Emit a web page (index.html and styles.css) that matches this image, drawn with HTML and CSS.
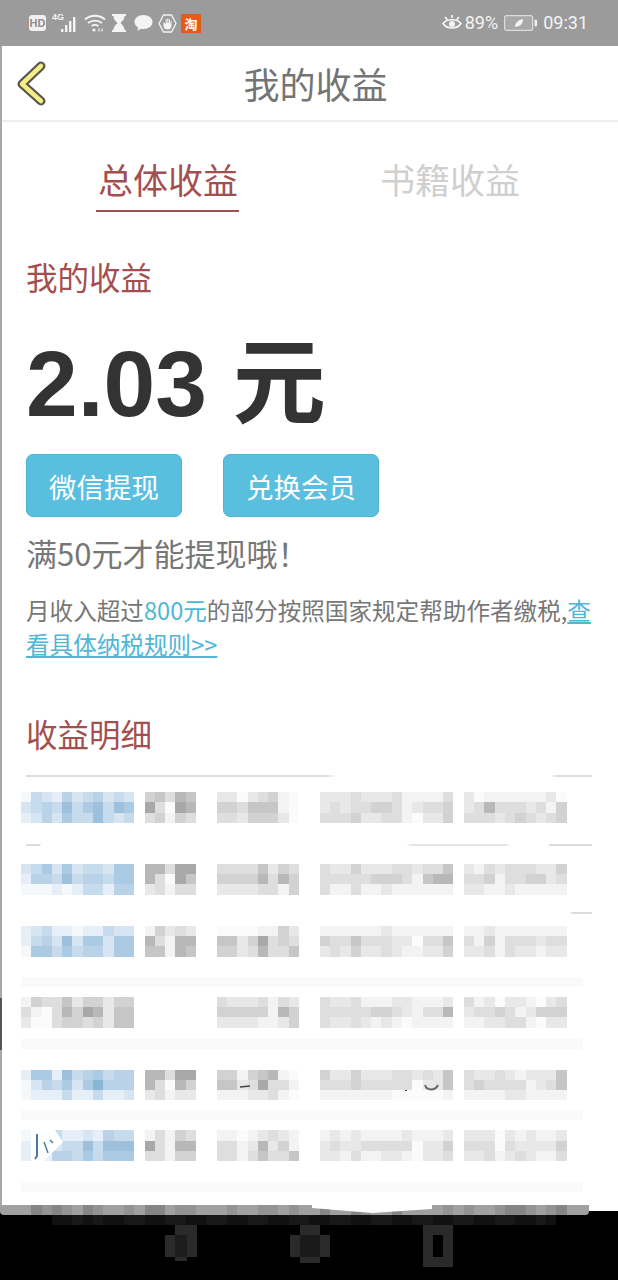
FILE: index.html
```html
<!DOCTYPE html>
<html lang="zh-CN">
<head>
  <meta charset="UTF-8">
  <meta name="viewport" content="width=device-width, initial-scale=1.0">
  <title>我的收益</title>
  <link rel="stylesheet" href="styles.css">
</head>
<body>
  <!-- Status bar -->
  <div class="status-bar">
    <div class="status-left">
      <span class="hd-badge">HD</span>
      <span class="net-label">4G</span>
      <svg class="icon-signal" width="18" height="22" viewBox="0 0 18 22">
        <rect x="0" y="17" width="2.4" height="3"/><rect x="4" y="13" width="2.4" height="7"/>
        <rect x="8" y="9" width="2.4" height="11"/><rect x="12" y="5" width="2.4" height="15"/>
      </svg>
      <svg class="icon-wifi" width="22" height="20" viewBox="0 0 22 20" fill="none" stroke="#f4f4f4" stroke-width="1.8">
        <path d="M1 6.500C6.500 1.500 15.500 1.500 21 6.500"/>
        <path d="M4 10C8 6.800 14 6.800 18 10"/>
        <path d="M7.500 13C9.500 11.800 12.500 11.800 14.500 13"/>
        <circle cx="10" cy="17" r="1.600" fill="#f4f4f4" stroke="none"/>
        <path d="M15 15.500v3M18 15.500v3" stroke-width="1.200"/>
      </svg>
      <svg class="icon-glass" width="14" height="18" viewBox="0 0 14 18">
        <path d="M0 0h14v2h-1.500C12.500 6 9.500 7.500 8.500 9c1 1.500 4 3 4 7H14v2H0v-2h1.500c0-4 3-5.500 4-7-1-1.500-4-3-4-7H0z"/>
      </svg>
      <svg class="icon-bubble" width="19" height="18" viewBox="0 0 19 18">
        <path d="M9.500 1C14.500 1 18.500 4 18.500 8S14.500 15 9.500 15C8.500 15 8 15 7 14.700L3.500 17 4 13.500C2 12.200.5 10.200.5 8 .5 4 4.500 1 9.500 1z"/>
      </svg>
      <svg class="icon-hand" width="19" height="19" viewBox="0 0 19 19">
        <path d="M5.500 1h8L18 9.500 13.500 18h-8L1 9.500z" fill="none" stroke="#f4f4f4" stroke-width="1.300"/>
        <path d="M5.500 8v4c0 2 1.500 3.500 4 3.500s4-1.500 4-4V7h-1v2.500h-.6V5h-1v4h-.6V4.500h-1V9h-.6V5h-1v5z"/>
      </svg>
      <span class="tao-badge">淘</span>
    </div>
    <div class="status-right">
      <svg class="icon-eye" width="20" height="18" viewBox="0 0 20 18" fill="none" stroke="#f4f4f4" stroke-width="1.700">
        <path d="M1 9.500C5 4.500 15 4.500 19 9.500 15 15.500 5 15.500 1 9.500z"/>
        <circle cx="10" cy="10" r="3" fill="#f4f4f4" stroke="none"/>
        <path d="M3 3l2.500 3M17 3l-2.500 3M10 1v3"/>
      </svg>
      <span class="status-text pct">89%</span>
      <svg class="icon-battery" width="33" height="16" viewBox="0 0 33 16">
        <rect x=".6" y=".6" width="28" height="14.800" rx="2" fill="#a8a8a8" stroke="#dcdcdc" stroke-width="1.200"/>
        <rect x="30.500" y="4.500" width="2.500" height="7" rx="1" fill="#f0f0f0"/>
        <path d="M11 12c0-4 3-7 8-8 0 4-2 7-6 7.500z" fill="#f4f4f4"/>
      </svg>
      <span class="status-text">09:31</span>
    </div>
  </div>

  <div class="page">
    <div class="header">
      <svg class="back-icon" width="32" height="46" viewBox="0 0 32 46" fill="none" stroke-linecap="round" stroke-linejoin="round">
        <path d="M25 6L6 24 25 41" stroke="#57574f" stroke-width="9"/>
        <path d="M25 6L6 24 25 41" stroke="#f6ee84" stroke-width="4.500"/>
      </svg>
      <span class="header-title">我的收益</span>
    </div>

    <div class="tabs">
      <span class="tab tab-active">总体收益</span>
      <span class="tab">书籍收益</span>
    </div>

    <div class="section-title earn-title">我的收益</div>
    <div class="amount">2.03 元</div>

    <div class="actions">
      <button class="action-btn">微信提现</button>
      <button class="action-btn">兑换会员</button>
    </div>

    <div class="hint">满50元才能提现哦！</div>
    <p class="tax-note">月收入超过<span class="accent">800元</span>的部分按照国家规定帮助作者缴税,<a class="tax-link">查看具体纳税规则&gt;&gt;</a></p>

    <div class="section-title detail-title">收益明细</div>

    <!-- Detail rows are pixelated in the reference -->
    <div class="sep sep-a"></div>
    <div class="mosaic row-1" data-row="0"></div>
    <div class="sep sep-b"></div>
    <div class="mosaic row-2" data-row="1"></div>
    <div class="sep sep-c"></div>
    <div class="mosaic row-3" data-row="2"></div>
    <div class="band band-1"></div>
    <div class="mosaic row-4" data-row="3"></div>
    <div class="band band-2"></div>
    <div class="mosaic row-5" data-row="4">
      <svg class="marks" width="430" height="31" viewBox="0 0 430 31" fill="none" stroke="#444">
        <path d="M219 17l10-1" stroke-width="1.500"/>
        <path d="M404 15c2 6 10 6 13 0" stroke="#666" stroke-width="2"/>
        <path d="M385 20v1" stroke-width="2"/>
      </svg>
    </div>
    <div class="band band-3"></div>
    <div class="mosaic row-6" data-row="5">
      <svg class="scratch" width="32" height="32" viewBox="0 0 32 32" fill="none">
        <path d="M0 0h24l8 12-20 20H0z" fill="#fff"/>
        <path d="M6 4v22l-2 3" stroke="#4a7ba6" stroke-width="2"/>
        <path d="M13 12l4 11M19 10l3 3" stroke="#4a7ba6" stroke-width="1.500"/>
      </svg>
    </div>
    <div class="band band-4"></div>
  </div>

  <div class="strip-wrap">
    <div class="strip">
      <div class="mosaic strip-cells" data-row="6"></div>
      <svg class="strip-blot" width="120" height="8" viewBox="0 0 120 8"><path d="M0 0h120v4L60 8 0 3z" fill="#fff"/></svg>
    </div>
    <div class="strip-rest"></div>
  </div>

  <div class="nav-area">
    <div class="mosaic nav-cells" data-row="7"></div>
    <div class="nav-icons">
      <svg width="32" height="36" viewBox="0 0 32 36" fill="#2a2a2a">
        <rect x="10" y="0" width="22" height="10"/><rect x="0" y="10" width="32" height="22"/><rect x="10" y="32" width="12" height="4"/>
        <rect x="10" y="10" width="12" height="22" fill="#1d1d1d"/>
      </svg>
      <svg width="40" height="38" viewBox="0 0 40 38" fill="#2a2a2a">
        <rect x="10" y="0" width="20" height="10"/><rect x="0" y="10" width="40" height="22"/><rect x="10" y="32" width="20" height="6"/>
        <rect x="10" y="10" width="20" height="22" fill="#1a1a1a"/>
      </svg>
      <svg width="30" height="42" viewBox="0 0 30 42" fill="#2a2a2a">
        <rect x="0" y="0" width="30" height="42"/>
        <rect x="10" y="10" width="10" height="22" fill="#000"/>
      </svg>
    </div>
  </div>

  <script>
    // each line: 11 + gap + 5 + 2 gaps + 8 + 2 gaps + 13 + gap + 10 cells, digit = shade
    var rows = [
      { lead: 'b', lines: [
        '03214234232 45365  22023410  2223222311113 2011111120',
        '23436356365 73076  44355510  2323344312334 2363332314',
        '12425336323 34143  33244420  3334223310224 3332343234' ] },
      { lead: 'b', lines: [
        '23525233255 66377  33335243  3224222332335 2132333224',
        '14436344355 63075  44446364  3333344431566 3341334423',
        '00010133144 23133  22223314  3113112111111 2211211111' ] },
      { lead: 'b', lines: [
        '12311011322 14232  00001142  1111112111111 1121111111',
        '13426255255 63166  55247343  4335333220335 3141333233',
        '05535344255 55165  44236335  2324223211224 2231322122' ] },
      { lead: 'g', lines: [
        '14335244244        32223132  3223111221112 3120221023',
        '31036476255        44444164  3333344321336 2334312444',
        '20034434255        22221124  3223212101111 1122331022' ] },
      { lead: 'b', lines: [
        '15516345344 66377  44145610  4224222332325 3223212225',
        '02435257444 63064  55237331  3334333330225 3433331235',
        '01113113112 23122  11122310  1111111000001 1111221111' ] },
      { lead: 'b', lines: [
        '02131121433 13143  11012321  1212111121112 2220212112',
        '13123363666 73166  33126241  2322333330224 3330322224',
        '12144353555 33144  33135335  2213112210223 2231232113' ] },
      { lead: 's', lines: [
        '13232132112 33122  12112212  3113211311112 2112332123' ] },
      { lead: 'd', lines: [
        '   1121211221122112211221122112211221122112211221121' ] }
    ];

    document.querySelectorAll('.mosaic').forEach(function (box) {
      var row = rows[box.dataset.row];
      var first = box.firstChild;
      row.lines.forEach(function (line) {
        for (var i = 0; i < line.length; i++) {
          var cell = document.createElement('span');
          if (line[i] !== ' ') {
            cell.className = (i < 11 ? row.lead : (row.lead === 'b' || row.lead === 'g' ? 'g' : row.lead)) + line[i];
          }
          box.insertBefore(cell, first);
        }
      });
    });
  </script>
</body>
</html>
```

FILE: styles.css
```css
body, html {
  margin: 0;
  padding: 0;
  background-color: #000;
  overflow: hidden;
  font-family: 'Noto Sans CJK SC', 'Noto Sans', sans-serif;
}
body {
  width: 618px;
  height: 1280px;
}

/* Status bar */
.status-bar {
  height: 46px;
  background-color: #9b9b9b;
  display: flex;
  justify-content: space-between;
  align-items: center;
  padding: 0 30px 0 29px;
  box-sizing: border-box;
  color: #f4f4f4;
  fill: #f4f4f4;
}
.status-left, .status-right {
  display: flex;
  align-items: center;
}
.hd-badge {
  width: 17px;
  height: 16px;
  border-radius: 3px;
  background-color: #f0f0f0;
  color: #8d8d8d;
  font: bold 11px/16px 'Liberation Sans', sans-serif;
  text-align: center;
}
.net-label {
  font: bold 9px/10px 'Liberation Sans', sans-serif;
  margin: 0 0 12px 6px;
  width: 9px;
}
.icon-signal { margin-left: 0; }
.icon-wifi { margin-left: 5px; }
.icon-glass { margin-left: 6px; }
.icon-bubble { margin-left: 8px; }
.icon-hand { margin-left: 5px; }
.tao-badge {
  width: 20px;
  height: 19px;
  margin-left: 4px;
  background-color: #e8591a;
  color: #fff;
  font-size: 13px;
  font-weight: 700;
  line-height: 19px;
  text-align: center;
}
.status-text {
  font: 18px/24px 'Roboto', sans-serif;
}
.pct { margin: 0 6px 0 3px; }
.icon-battery { margin-right: 6px; }

/* Page */
.page {
  height: 1159px;
  box-sizing: border-box;
  background-color: #fff;
  border-left: 2px solid #a8a8a8;
  position: relative;
}
/* dark scrap on the left edge */
.page::before {
  content: "";
  position: absolute;
  left: -2px;
  top: 952px;
  width: 2px;
  height: 52px;
  background-color: #555;
}
.header {
  height: 76px;
  border-bottom: 2px solid #ededed;
  box-sizing: border-box;
  display: flex;
  justify-content: center;
  align-items: center;
  position: relative;
}
.back-icon {
  position: absolute;
  left: 14px;
  top: 14px;
}
.header-title {
  font-size: 36px;
  line-height: 50px;
  color: #747474;
  margin-left: 11px;
}
.tabs {
  display: flex;
  margin-top: 32px;
  padding-left: 94px;
}
.tab {
  font-size: 35px;
  line-height: 50px;
  color: #cfcfcf;
  margin-right: 139px;
  padding: 0 1px 6px 2px;
  flex-shrink: 0;
  white-space: nowrap;
}
.tab-active {
  color: #a34f4f;
  border-bottom: 2px solid #a34f4f;
}
.section-title {
  font-size: 31.500px;
  line-height: 44px;
  color: #a34f4f;
  margin-left: 24px;
}
.earn-title { margin-top: 42px; }
.amount {
  font: bold 93px/100px 'Liberation Sans', 'Noto Sans CJK SC', sans-serif;
  color: #333;
  margin: 36px 0 0 24px;
}
.actions {
  display: flex;
  gap: 41px;
  margin: 20px 0 0 24px;
}
.action-btn {
  width: 156px;
  height: 63px;
  padding: 0;
  border: 1px solid #51b3d2;
  border-radius: 7px;
  background-color: #5abfdf;
  color: #fff;
  font-family: inherit;
  font-size: 27.500px;
}
.hint {
  font-size: 31px;
  line-height: 40px;
  color: #777;
  margin: 16px 0 0 24px;
}
.tax-note {
  width: 570px;
  margin: 20px 0 0 24px;
  font-size: 23.600px;
  line-height: 34px;
  color: #777;
}
.accent { color: #4fb6d6; }
.tax-link {
  color: #4fb6d6;
  text-decoration: underline;
}
.detail-title { margin-top: 50px; }

/* Detail rows */
.sep {
  height: 2px;
  margin-left: 24px;
  width: 566px;
}
.sep-a {
  margin-top: 20px;
  background: linear-gradient(90deg, #ddd 0, #ddd 300px, #fff 310px, #fff 525px, #ddd 530px);
}
.sep-b {
  margin-top: 21px;
  background: linear-gradient(90deg, #ddd 0, #ddd 14px, #fff 15px, #fff 380px, #e6e6e6 385px, #e6e6e6 480px, #fff 485px, #fff 522px, #ddd 524px);
}
.sep-c {
  margin-top: 17px;
  background: linear-gradient(90deg, #fff 0, #fff 544px, #ddd 546px);
}
.mosaic {
  display: grid;
  grid-template-columns: repeat(53, 10.3px);
  grid-auto-rows: 10.3px;
  margin-left: 19px;
  position: relative;
}
.row-1 { margin-top: 15px; }
.row-2 { margin-top: 18px; }
.row-3 { margin-top: 12px; }
.row-4 { margin-top: 10px; }
.row-5 { margin-top: 21px; }
.row-6 { margin-top: 10px; }
.band {
  height: 10px;
  width: 562px;
  margin-left: 19px;
  background-color: #fafafa;
}
.band-1 { margin-top: 20px; }
.band-2 { margin-top: 11px; }
.band-3 { margin-top: 10px; }
.band-4 { margin-top: 21px; }
.scratch, .marks {
  position: absolute;
  left: 10px;
  top: 0;
}
.marks { left: 0; }

/* mosaic shades */
.b0 { background-color: #f4f8fb; }
.b1 { background-color: #e6eff7; }
.b2 { background-color: #d6e5f1; }
.b3 { background-color: #c6dbeb; }
.b4 { background-color: #b9d2e7; }
.b5 { background-color: #abcae3; }
.b6 { background-color: #9dc1dd; }
.b7 { background-color: #8ab6d6; }
.g0 { background-color: #fbfbfb; }
.g1 { background-color: #f3f3f3; }
.g2 { background-color: #e8e8e8; }
.g3 { background-color: #dedede; }
.g4 { background-color: #d2d2d2; }
.g5 { background-color: #c6c6c6; }
.g6 { background-color: #b8b8b8; }
.g7 { background-color: #a8a8a8; }
.s1 { background-color: #a0a0a0; }
.s2 { background-color: #939393; }
.s3 { background-color: #858585; }
.d1 { background-color: #111; }
.d2 { background-color: #181818; }

/* Bottom of the screen */
.strip-wrap {
  display: flex;
  align-items: flex-start;
}
.strip {
  width: 589px;
  height: 10px;
  overflow: hidden;
  background-color: #a0a0a0;
  border-radius: 0 0 4px 4px;
  position: relative;
}
.strip-cells { margin-left: 21px; }
.strip-blot {
  position: absolute;
  left: 312px;
  top: 0;
}
.strip-rest {
  flex-grow: 1;
  height: 6px;
  background-color: #fff;
}
.nav-area { height: 65px; }
.nav-cells { margin-left: 21px; }
.nav-icons {
  display: flex;
  align-items: flex-start;
  gap: 93px;
  padding-left: 165px;
}
```
